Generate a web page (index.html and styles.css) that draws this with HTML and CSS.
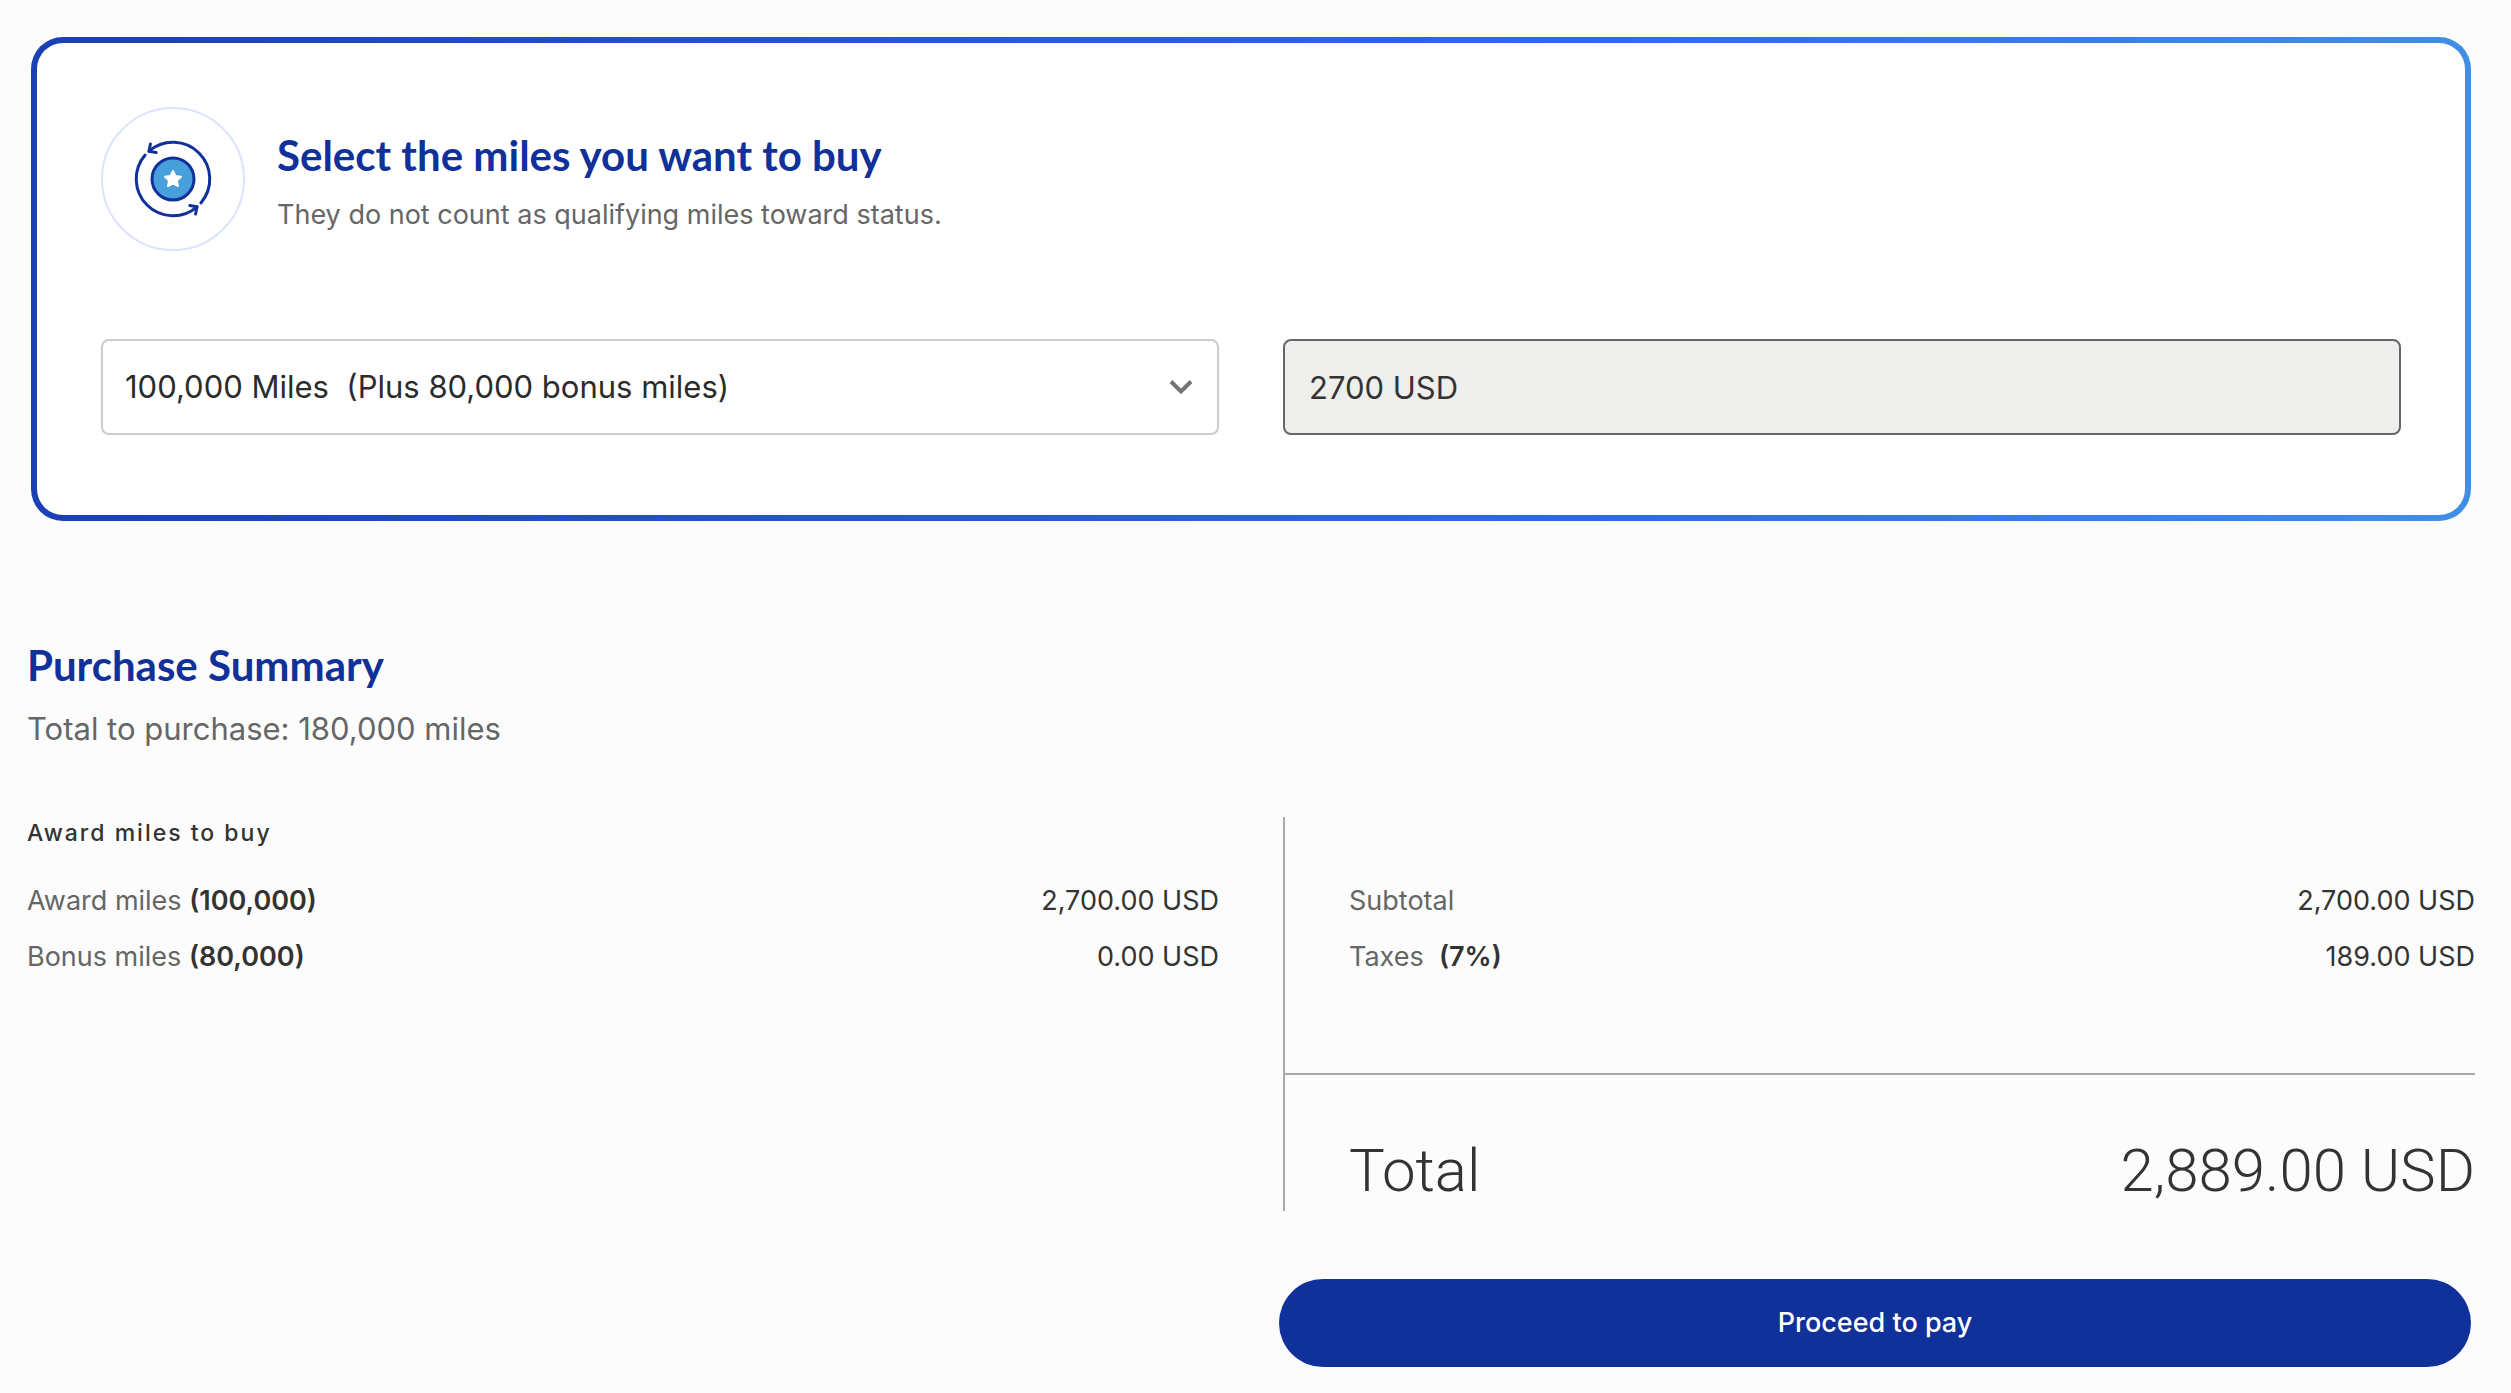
FILE: index.html
```html
<!DOCTYPE html>
<html lang="en">
<head>
  <meta charset="utf-8">
  <meta name="viewport" content="width=device-width, initial-scale=1">
  <title>Buy miles</title>
  <link rel="stylesheet" href="styles.css">
</head>
<body>
  <form class="page">
    <section class="card">
      <header class="card-header">
        <span class="card-icon">
          <svg viewBox="0 0 80 80" width="80" height="80" fill="none" stroke="#10309a" stroke-width="3" stroke-linecap="round" stroke-linejoin="round" aria-hidden="true">
            <path d="M16 12.200A36.730 36.730 0 0 1 67.900 63.900"/>
            <path d="M12.100 16.100A36.730 36.730 0 0 0 64 67.800"/>
            <path d="M17.400 5L16 12.200L23.200 13.400"/>
            <path d="M56.800 66.600L64 67.800L62.600 75"/>
            <circle cx="40" cy="40" r="21" fill="#479fdc"/>
            <path d="M40 32L42.400 37L48 37.700L43.900 41.500L45 47L40 44.300L35 47L36.100 41.500L32 37.700L37.600 37Z" fill="#fff" stroke="#fff" stroke-width="2"/>
          </svg>
        </span>
        <div class="card-heading">
          <h1 class="title">Select the miles you want to buy</h1>
          <p class="note">They do not count as qualifying miles toward status.</p>
        </div>
      </header>
      <div class="columns">
        <div class="select-wrap">
          <select class="field select" aria-label="Miles to buy">
            <option>100,000 Miles&nbsp; (Plus 80,000 bonus miles)</option>
          </select>
          <svg class="chevron" viewBox="0 0 24 16" width="24" height="16" fill="none" stroke="#757575" stroke-width="4" aria-hidden="true">
            <path d="M2 2.500L12 12.500L22 2.500"/>
          </svg>
        </div>
        <input class="field price" type="text" value="2700 USD" aria-label="Price" readonly>
      </div>
    </section>

    <section class="summary">
      <h2 class="title">Purchase Summary</h2>
      <p class="lead">Total to purchase: 180,000 miles</p>
      <div class="columns">
        <div class="breakdown">
          <h3 class="label">Award miles to buy</h3>
          <dl class="rows">
            <div class="row"><dt>Award miles <b>(100,000)</b></dt><dd>2,700.00 USD</dd></div>
            <div class="row"><dt>Bonus miles <b>(80,000)</b></dt><dd>0.00 USD</dd></div>
          </dl>
        </div>
        <div class="totals">
          <dl class="rows">
            <div class="row"><dt>Subtotal</dt><dd>2,700.00 USD</dd></div>
            <div class="row"><dt>Taxes&nbsp; <b>(7%)</b></dt><dd>189.00 USD</dd></div>
          </dl>
          <p class="grand-total"><span>Total</span><span>2,889.00 USD</span></p>
        </div>
      </div>
    </section>

    <footer class="columns actions">
      <button class="pay" type="submit">Proceed to pay</button>
    </footer>
  </form>
</body>
</html>
```
FILE: styles.css
```css
* {
  box-sizing: border-box;
}

body {
  margin: 0;
  background: #fcfcfc;
  color: #333;
  font: 400 27px/56px Inter, "Liberation Sans", sans-serif;
}

h1, h2, h3, p, dl, dd {
  margin: 0;
}

.page {
  padding: 37px 0 24px;
}

.columns {
  display: grid;
  grid-template-columns: 1fr 1fr;
  column-gap: 64px;
}

.title {
  color: #10309a;
  font: 700 42px/56px Lato, sans-serif;
}

/* Purchase card */
.card {
  margin: 0 40px 0 31px;
  padding: 64px 64px 80px;
  border: 6px solid transparent;
  border-radius: 32px;
  background:
    linear-gradient(#fff, #fff) padding-box,
    linear-gradient(90deg, #1b3fb4, #2e67f8 64%, #418fe4) border-box;
}

.card-header {
  display: flex;
  align-items: center;
  gap: 32px;
  margin-bottom: 88px;
}

.card-icon {
  display: grid;
  place-items: center;
  flex: none;
  width: 144px;
  height: 144px;
  border: 2px solid #dae4fd;
  border-radius: 50%;
}

.card-heading {
  padding-top: 12px;
}

.note {
  margin-top: 4px;
  color: #666;
}

.field {
  width: 100%;
  height: 96px;
  padding: 0 24px;
  border: 2px solid #ccc;
  border-radius: 8px;
  background: #fff;
  color: #333;
  font: 400 31px/40px Inter, "Liberation Sans", sans-serif;
}

.select-wrap {
  display: grid;
  align-items: center;
}

.select-wrap > * {
  grid-area: 1 / 1;
}

.select {
  padding: 0 22px;
  color: #2b2b2b;
  appearance: none;
}

.chevron {
  justify-self: end;
  margin-right: 26px;
  pointer-events: none;
}

.price {
  border-color: #666;
  background: #eeeeec;
}

/* Summary */
.summary {
  padding: 116px 36px 0 27px;
}

.lead {
  margin: 8px 0 60px;
  color: #666;
  font-size: 31px;
}

.label {
  padding-bottom: 24px;
  font-size: 23px;
  font-weight: 500;
  line-height: 32px;
  letter-spacing: 2px;
}

.row {
  display: flex;
  justify-content: space-between;
}

.row dt {
  color: #666;
}

.row b {
  color: #333;
  font-weight: 600;
}

.totals {
  border-left: 2px solid #aaa;
}

.totals .rows {
  padding: 56px 0 88px 64px;
}

.grand-total {
  display: flex;
  justify-content: space-between;
  padding: 60px 0 4px 64px;
  border-top: 2px solid #aaa;
  font: 300 60px/72px Roboto, sans-serif;
}

.actions {
  padding: 68px 40px 0 23px;
}

.pay {
  grid-column: 2;
  height: 88px;
  border: 0;
  border-radius: 44px;
  background: #10309a;
  color: #fff;
  font: 500 27px/40px Inter, "Liberation Sans", sans-serif;
}
```
